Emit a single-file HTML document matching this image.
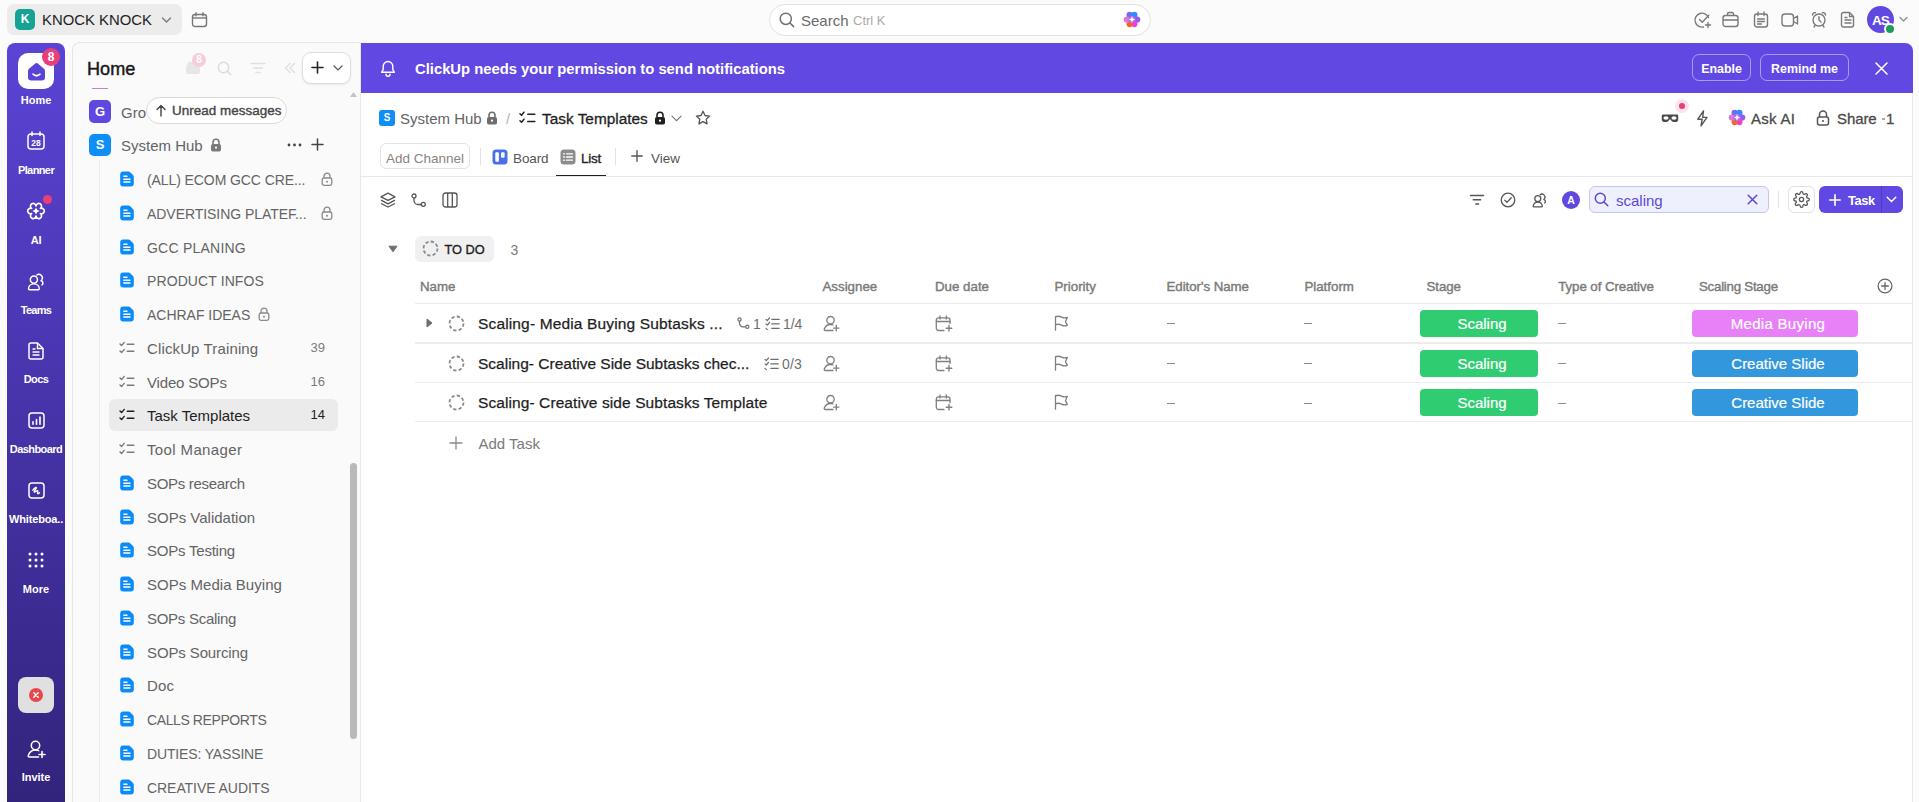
<!DOCTYPE html>
<html><head><meta charset="utf-8">
<style>
*{box-sizing:border-box;margin:0;padding:0}
html,body{width:1919px;height:802px;overflow:hidden}
body{background:#fbfbfb;font-family:"Liberation Sans",sans-serif;color:#202020;position:relative}
.a{position:absolute}
.ic{position:absolute;display:block;overflow:visible}
.t{position:absolute;white-space:nowrap;line-height:1}
/* rail */
#rail{left:7px;top:42.5px;width:58px;height:780px;border-radius:8px 8px 0 0;background:linear-gradient(180deg,#5a44d6 0%,#4a36b0 40%,#31237a 100%)}
.rl{position:absolute;left:7px;width:58px;text-align:center;color:#fff;font-weight:700;font-size:11px;line-height:1;letter-spacing:0}
/* sidebar */
#side{left:72px;top:42px;width:289px;height:780px;background:#fafafa;border:1px solid #e6e6e6;border-right:1px solid #e8e8e8;border-radius:8px 0 0 0}
.si{position:absolute;left:147px;font-size:14.6px;color:#646464;line-height:1;white-space:nowrap}
.cnt{position:absolute;font-size:13px;color:#7a7a7a;line-height:1}
/* main */
#main{left:361px;top:43px;width:1551px;height:780px;background:#fff;border-radius:0 8px 0 0;overflow:hidden}
#banner{left:0;top:0;width:1551px;height:50px;background:#6248e3}
.bbtn{position:absolute;top:11px;height:27px;border:1px solid rgba(255,255,255,.45);border-radius:7px;color:#fff;font-weight:700;font-size:13.5px;line-height:29px;text-align:center}
.hd{position:absolute;top:280px;font-size:13.3px;color:#7a7a7a;line-height:1;white-space:nowrap;-webkit-text-stroke:0.4px #7a7a7a}
.row{position:absolute;left:54px;width:1497px;border-bottom:1px solid #ececec}
.tn{position:absolute;left:117px;font-size:15.4px;color:#1e1e1e;line-height:1;white-space:nowrap;-webkit-text-stroke:0.25px #1e1e1e}
.dash{position:absolute;width:8px;height:1.3px;background:#8a8a8a}
.badge{position:absolute;height:27px;border-radius:4px;color:#fff;font-size:15px;line-height:27px;text-align:center;padding-left:6px;-webkit-text-stroke:0.2px #fff}
</style></head><body>

<!-- ============ TOP BAR ============ -->
<div class="a" style="left:7px;top:4px;width:175px;height:31px;background:#ececec;border-radius:7px"></div>
<div class="a" style="left:15px;top:9px;width:20px;height:21px;background:#16a394;border-radius:5px;color:#fff;font-weight:700;font-size:12px;line-height:21px;text-align:center">K</div>
<div class="t" style="left:42px;top:13px;font-size:14.9px;color:#1f1f1f">KNOCK KNOCK</div>
<svg class="ic" style="left:161px;top:16px" width="11" height="8" viewBox="0 0 11 8"><path d="M1.5 2l4 4 4-4" fill="none" stroke="#777" stroke-width="1.3" stroke-linecap="round" stroke-linejoin="round"/></svg>
<svg class="ic" style="left:191px;top:11px" width="17" height="17" viewBox="0 0 17 17"><rect x="1.5" y="3.5" width="14" height="12" rx="2.5" fill="none" stroke="#777" stroke-width="1.4"/><path d="M1.5 7h14" stroke="#777" stroke-width="1.4"/><path d="M5 1.8v3M12 1.8v3" stroke="#777" stroke-width="1.4" stroke-linecap="round"/></svg>

<!-- search -->
<div class="a" style="left:769px;top:3.5px;width:382px;height:32.5px;background:#fff;border:1px solid #e2e2e2;border-radius:16px"></div>
<svg class="ic" style="left:779px;top:12px" width="16" height="16" viewBox="0 0 16 16"><circle cx="6.8" cy="6.8" r="5.6" fill="none" stroke="#6e6e6e" stroke-width="1.5"/><path d="M11 11l3.6 3.6" stroke="#6e6e6e" stroke-width="1.5" stroke-linecap="round"/></svg>
<div class="t" style="left:801px;top:13px;font-size:15px;color:#6b6b6b">Search</div>
<div class="t" style="left:853px;top:14px;font-size:13px;color:#a9a9a9">Ctrl K</div>
<svg class="ic" style="left:1123px;top:11px" width="18" height="17" viewBox="0 0 18 17"><circle cx="6.6" cy="3.9" r="3.1" fill="#6f6cf2"/><circle cx="11.4" cy="3.9" r="3.1" fill="#2f8cff"/><circle cx="14.2" cy="8.5" r="3.1" fill="#9a57f0"/><circle cx="11.4" cy="13.1" r="3.1" fill="#ec3fd0"/><circle cx="6.6" cy="13.1" r="3.1" fill="#f2652c"/><circle cx="3.8" cy="8.5" r="3.1" fill="#d779d6"/><circle cx="9" cy="8.5" r="3.5" fill="#b26be8"/><path d="M9 5.3l.9 2.3 2.3.9-2.3.9L9 11.7l-.9-2.3-2.3-.9 2.3-.9z" fill="#fff"/></svg>

<!-- top right icons -->
<svg class="ic" style="left:1694px;top:11px" width="18" height="18" viewBox="0 0 18 18"><path d="M14.5 6.5A7 7 0 1 0 9.5 16" fill="none" stroke="#7a7a7a" stroke-width="1.4" stroke-linecap="round"/><path d="M5.5 8.5l2.8 2.8 6.5-7" fill="none" stroke="#7a7a7a" stroke-width="1.4" stroke-linecap="round" stroke-linejoin="round"/><path d="M14 11.5v5M11.5 14h5" stroke="#7a7a7a" stroke-width="1.4" stroke-linecap="round"/></svg>
<svg class="ic" style="left:1722px;top:11px" width="17" height="17" viewBox="0 0 17 17"><rect x="1" y="4.5" width="15" height="11" rx="2.5" fill="none" stroke="#7a7a7a" stroke-width="1.4"/><path d="M5.5 4.5V3a1.5 1.5 0 0 1 1.5-1.5h3A1.5 1.5 0 0 1 11.5 3v1.5M1 9h15" fill="none" stroke="#7a7a7a" stroke-width="1.4"/></svg>
<svg class="ic" style="left:1753px;top:11px" width="16" height="17" viewBox="0 0 16 17"><rect x="1.5" y="3" width="13" height="13" rx="2.5" fill="none" stroke="#7a7a7a" stroke-width="1.4"/><path d="M5 1v3.5M11 1v3.5M4.5 8h7M4.5 10.5h7M4.5 13h4" stroke="#7a7a7a" stroke-width="1.3" stroke-linecap="round"/></svg>
<svg class="ic" style="left:1781px;top:12px" width="18" height="16" viewBox="0 0 18 16"><rect x="1" y="2" width="11.5" height="12" rx="3" fill="none" stroke="#7a7a7a" stroke-width="1.4"/><path d="M12.5 6.5l4-2.5v8l-4-2.5" fill="none" stroke="#7a7a7a" stroke-width="1.4" stroke-linejoin="round"/></svg>
<svg class="ic" style="left:1811px;top:11px" width="16" height="17" viewBox="0 0 16 17"><circle cx="8" cy="9" r="6" fill="none" stroke="#7a7a7a" stroke-width="1.4"/><path d="M8 5.8V9l2 2M1.5 4a2.5 2.5 0 0 1 3-2.3M14.5 4a2.5 2.5 0 0 0-3-2.3M4 14.5L3 16M12 14.5l1 1.5" fill="none" stroke="#7a7a7a" stroke-width="1.4" stroke-linecap="round"/></svg>
<svg class="ic" style="left:1840px;top:11px" width="16" height="17" viewBox="0 0 16 17"><path d="M3.5 1.5h6l4 4V14a2 2 0 0 1-2 2h-8a2 2 0 0 1-2-2V3.5a2 2 0 0 1 2-2z" fill="none" stroke="#7a7a7a" stroke-width="1.4" stroke-linejoin="round"/><path d="M9.5 1.5v4h4M4.5 9h7M4.5 12h7M4.5 6.5h3" fill="none" stroke="#7a7a7a" stroke-width="1.3"/></svg>
<div class="a" style="left:1867px;top:6px;width:27px;height:27px;border-radius:50%;background:#6049e3;color:#fff;font-weight:700;font-size:13.5px;line-height:29px;text-align:center;letter-spacing:-0.8px">AS</div>
<div class="a" style="left:1884px;top:23px;width:12px;height:12px;border-radius:50%;background:#1e9a5a;border:2px solid #fbfbfb"></div>
<svg class="ic" style="left:1899px;top:16px" width="9" height="7" viewBox="0 0 9 7"><path d="M1 1.5l3.5 3.5 3.5-3.5" fill="none" stroke="#888" stroke-width="1.2" stroke-linecap="round"/></svg>

<!-- ============ RAIL ============ -->
<div id="rail" class="a"></div>
<div class="a" style="left:18px;top:53px;width:36px;height:36px;background:#fff;border-radius:10px"></div>
<svg class="ic" style="left:27px;top:62px" width="19" height="19" viewBox="0 0 19 19"><path d="M2 6.8L7.9 1.7Q9.5.4 11.1 1.7L17 6.8Q18 7.6 18 9v6.3Q18 18.5 14.8 18.5H4.2Q1 18.5 1 15.3V9Q1 7.6 2 6.8z" fill="#5a44d6"/><path d="M6 12.2Q9.5 15.3 13 12.2" fill="none" stroke="#fff" stroke-width="1.7" stroke-linecap="round"/></svg>
<div class="a" style="left:42px;top:48px;width:18px;height:18px;border-radius:50%;background:#e83f7a;color:#fff;font-size:12px;font-weight:700;line-height:18px;text-align:center">8</div>
<div class="rl" style="top:95px;letter-spacing:0px">Home</div>

<svg class="ic" style="left:27px;top:131px" width="18" height="19" viewBox="0 0 18 19"><rect x="1" y="3" width="16" height="15" rx="3" fill="none" stroke="#fff" stroke-width="1.5"/><path d="M5 1v3.5M13 1v3.5" stroke="#fff" stroke-width="1.5" stroke-linecap="round"/><text x="9" y="15" font-family="Liberation Sans" font-size="8.5" font-weight="700" fill="#fff" text-anchor="middle">28</text></svg>
<div class="rl" style="top:165px;letter-spacing:-0.6px">Planner</div>

<svg class="ic" style="left:28.2px;top:203.2px" width="16" height="16" viewBox="0 0 19 19"><path d="M14.73 6.48A3.3 3.3 0 1 1 14.73 12.52A3.3 3.3 0 1 1 9.50 15.54A3.3 3.3 0 1 1 4.27 12.52A3.3 3.3 0 1 1 4.27 6.48A3.3 3.3 0 1 1 9.50 3.46A3.3 3.3 0 1 1 14.73 6.48z" fill="none" stroke="#fff" stroke-width="2" stroke-linejoin="round"/><path d="M9.5 5.2l1.4 2.9 2.9 1.4-2.9 1.4-1.4 2.9-1.4-2.9-2.9-1.4 2.9-1.4z" fill="#fff"/></svg>
<div class="a" style="left:43px;top:195px;width:9px;height:9px;border-radius:50%;background:#e83f7a"></div>
<div class="rl" style="top:235px;letter-spacing:-0.25px">AI</div>

<svg class="ic" style="left:27px;top:272px" width="19" height="19" viewBox="0 0 16 16"><circle cx="5.8" cy="6.4" r="3" fill="none" stroke="#fff" stroke-width="1.25"/><path d="M1.3 14.2c0-2.5 2-4.2 4.5-4.2s4.5 1.7 4.5 4.2q0 .7-.7.7H2q-.7 0-.7-.7z" fill="none" stroke="#fff" stroke-width="1.25" stroke-linejoin="round"/><path d="M8.3 2.5a3 3 0 0 1 4.3 3.9q-.3.5-.8.8q1.8.8 1.6 2.5q-.1.8-.8 1.2" fill="none" stroke="#fff" stroke-width="1.25" stroke-linecap="round" stroke-linejoin="round"/></svg>
<div class="rl" style="top:305px;letter-spacing:-0.75px">Teams</div>

<svg class="ic" style="left:28px;top:342px" width="16" height="18" viewBox="0 0 16 18"><path d="M3 1h6.5L15 6.5V15a2 2 0 0 1-2 2H3a2 2 0 0 1-2-2V3a2 2 0 0 1 2-2z" fill="none" stroke="#fff" stroke-width="1.5" stroke-linejoin="round"/><path d="M9.5 1v5.5H15M4.5 10h7M4.5 13h7M4.5 7h3" fill="none" stroke="#fff" stroke-width="1.4"/></svg>
<div class="rl" style="top:374px;letter-spacing:-0.6px">Docs</div>

<svg class="ic" style="left:28px;top:412px" width="17" height="17" viewBox="0 0 17 17"><rect x="1" y="1" width="15" height="15" rx="3" fill="none" stroke="#fff" stroke-width="1.5"/><path d="M5 12.3V9.8M8.5 12.3V7.6M12 12.3V5" stroke="#fff" stroke-width="1.6" stroke-linecap="round"/></svg>
<div class="rl" style="top:444px;letter-spacing:-0.55px">Dashboard</div>

<svg class="ic" style="left:28px;top:482px" width="17" height="17" viewBox="0 0 17 17"><rect x="1" y="1" width="15" height="15" rx="3" fill="none" stroke="#fff" stroke-width="1.5"/><path d="M4.8 8.2c1.2-1.8 3.2-3.4 3.6-2.6.5 1-3 3.5-2.3 4.4.6.8 3.2-2 3.8-1.2.5.7-1 2.3-.3 2.8.4.3 1.3-.3 1.9-.9" fill="none" stroke="#fff" stroke-width="1.3" stroke-linecap="round" stroke-linejoin="round"/></svg>
<div class="rl" style="top:514px;letter-spacing:-0.14px">Whiteboa..</div>

<svg class="ic" style="left:27px;top:551px" width="18" height="18" viewBox="0 0 18 18"><g fill="#fff"><circle cx="3" cy="3" r="1.5"/><circle cx="9" cy="3" r="1.5"/><circle cx="15" cy="3" r="1.5"/><circle cx="3" cy="9" r="1.5"/><circle cx="9" cy="9" r="1.5"/><circle cx="15" cy="9" r="1.5"/><circle cx="3" cy="15" r="1.5"/><circle cx="9" cy="15" r="1.5"/><circle cx="15" cy="15" r="1.5"/></g></svg>
<div class="rl" style="top:584px;letter-spacing:0px">More</div>

<div class="a" style="left:18px;top:677px;width:36px;height:36px;background:#e0e0e0;border-radius:8px"></div>
<div class="a" style="left:29px;top:688px;width:14px;height:14px;border-radius:50%;background:#e5484d"></div>
<svg class="ic" style="left:29px;top:688px" width="14" height="14" viewBox="0 0 14 14"><path d="M4.8 4.8l4.4 4.4M9.2 4.8L4.8 9.2" stroke="#fff" stroke-width="1.5" stroke-linecap="round"/></svg>

<svg class="ic" style="left:27px;top:740px" width="19" height="19" viewBox="0 0 19 19"><circle cx="8.5" cy="5.5" r="4.2" fill="none" stroke="#fff" stroke-width="1.5"/><path d="M11.5 17H2.5c-1 0-1.5-.8-1.2-1.6C2.5 12 5 10 8.5 10c1.2 0 2.3.2 3.2.6" fill="none" stroke="#fff" stroke-width="1.5" stroke-linecap="round"/><path d="M15 11.5v6M12 14.5h6" stroke="#fff" stroke-width="1.6" stroke-linecap="round"/></svg>
<div class="rl" style="top:772px;letter-spacing:0px">Invite</div>

<!-- ============ SIDEBAR ============ -->
<div id="side" class="a"></div>
<div class="t" style="left:87px;top:60px;font-size:18.1px;color:#1a1a1a;-webkit-text-stroke:0.45px #1a1a1a">Home</div>
<svg class="ic" style="left:185px;top:60px" width="16" height="15" viewBox="0 0 16 15"><path d="M1 8l2-6h10l2 6v4a2 2 0 0 1-2 2H3a2 2 0 0 1-2-2z" fill="#e6e6e6"/></svg>
<div class="a" style="left:192px;top:53px;width:14px;height:14px;border-radius:50%;background:#f7cddd;color:#fff;font-size:10px;font-weight:700;line-height:14px;text-align:center">8</div>
<svg class="ic" style="left:217px;top:61px" width="15" height="15" viewBox="0 0 15 15"><circle cx="6.5" cy="6.5" r="5.2" fill="none" stroke="#dcdcdc" stroke-width="1.5"/><path d="M10.5 10.5l3.3 3.3" stroke="#dcdcdc" stroke-width="1.5" stroke-linecap="round"/></svg>
<svg class="ic" style="left:250px;top:62px" width="16" height="12" viewBox="0 0 16 12"><path d="M1 1.5h14M3.5 6h9M6 10.5h4" stroke="#e0e0e0" stroke-width="1.5" stroke-linecap="round"/></svg>
<svg class="ic" style="left:284px;top:62px" width="12" height="12" viewBox="0 0 12 12"><path d="M6 1.5L1.5 6 6 10.5M10.5 1.5L6 6l4.5 4.5" fill="none" stroke="#dedede" stroke-width="1.4" stroke-linecap="round" stroke-linejoin="round"/></svg>
<div class="a" style="left:302px;top:52px;width:49px;height:32px;background:#fff;border:1px solid #dedede;border-radius:9px;box-shadow:0 1px 2px rgba(0,0,0,.08)"></div>
<svg class="ic" style="left:311px;top:61px" width="13" height="13" viewBox="0 0 13 13"><path d="M6.5 1v11M1 6.5h11" stroke="#222" stroke-width="1.6" stroke-linecap="round"/></svg>
<svg class="ic" style="left:333px;top:65px" width="10" height="6" viewBox="0 0 10 6"><path d="M1 1l4 4 4-4" fill="none" stroke="#555" stroke-width="1.2" stroke-linecap="round"/></svg>
<div class="a" style="left:92px;top:88px;width:16px;height:1px;background:#c77ddb"></div>
<svg class="ic" style="left:349px;top:91px" width="9" height="7" viewBox="0 0 9 7"><path d="M4.5 1L8 6H1z" fill="#c4c4c4"/></svg>
<div class="a" style="left:89px;top:100px;width:22px;height:23px;background:#5f48e0;border-radius:5px;color:#fff;font-weight:700;font-size:13px;line-height:23px;text-align:center">G</div>
<div class="t" style="left:121px;top:105px;font-size:15px;color:#646464">Gro</div>
<div class="a" style="left:146px;top:97px;width:141px;height:27px;background:#fff;border:1px solid #d9d9d9;border-radius:14px"></div>
<svg class="ic" style="left:156px;top:104px" width="10" height="13" viewBox="0 0 10 13"><path d="M5 12V1.5M1 5.5l4-4 4 4" fill="none" stroke="#444" stroke-width="1.4" stroke-linecap="round" stroke-linejoin="round"/></svg>
<div class="t" style="left:172px;top:104px;font-size:13.4px;letter-spacing:0.05px;color:#474747;-webkit-text-stroke:0.4px #474747">Unread messages</div>
<div class="a" style="left:89px;top:134px;width:22px;height:22px;background:#0e8ff5;border-radius:5px;color:#fff;font-weight:700;font-size:13px;line-height:22px;text-align:center">S</div>
<div class="t" style="left:121px;top:138px;font-size:15px;color:#646464">System Hub</div>
<svg class="ic" style="left:210px;top:138px" width="12" height="14" viewBox="0 0 12 14"><path d="M3 6V4.2a3 3 0 0 1 6 0V6" fill="none" stroke="#7a7a7a" stroke-width="1.6"/><rect x="1" y="6" width="10" height="7.5" rx="1.8" fill="#7a7a7a"/><circle cx="6" cy="9.7" r="1.1" fill="#fafafa"/></svg>
<svg class="ic" style="left:287px;top:143px" width="15" height="4" viewBox="0 0 15 4"><circle cx="2" cy="2" r="1.4" fill="#444"/><circle cx="7.5" cy="2" r="1.4" fill="#444"/><circle cx="13" cy="2" r="1.4" fill="#444"/></svg>
<svg class="ic" style="left:311px;top:138px" width="13" height="13" viewBox="0 0 13 13"><path d="M6.5 1v11M1 6.5h11" stroke="#444" stroke-width="1.5" stroke-linecap="round"/></svg>
<div class="a" style="left:99px;top:160px;width:1px;height:642px;background:#ebebeb"></div>
<div class="a" style="left:109px;top:399px;width:229px;height:32px;background:#ebebeb;border-radius:6px"></div>
<svg class="ic" style="left:120px;top:171px" width="14" height="16" viewBox="0 0 14 16"><path d="M3.2 0.6h5.2q1.2 0 2 .8l2.6 2.6q.8.8.8 2V12.6a3 3 0 0 1-3 3H3.2a3 3 0 0 1-3-3V3.6a3 3 0 0 1 3-3z" fill="#0b8bfa"/><path d="M3.8 5.2h3.2M3.8 8.2h6.2M3.8 11h6.2" stroke="#fff" stroke-width="1.4" stroke-linecap="round"/></svg>
<div class="si" style="top:173px;font-size:14px;letter-spacing:-0.09px;color:#646464">(ALL) ECOM GCC CRE...</div>
<svg class="ic" style="left:321px;top:172px" width="12" height="14" viewBox="0 0 12 14"><path d="M3 6V4.2a3 3 0 0 1 6 0V6" fill="none" stroke="#8a8a8a" stroke-width="1.3"/><rect x="1.2" y="6" width="9.6" height="7.3" rx="1.8" fill="none" stroke="#8a8a8a" stroke-width="1.3"/><circle cx="6" cy="9.7" r="1" fill="#8a8a8a"/></svg>
<svg class="ic" style="left:120px;top:205px" width="14" height="16" viewBox="0 0 14 16"><path d="M3.2 0.6h5.2q1.2 0 2 .8l2.6 2.6q.8.8.8 2V12.6a3 3 0 0 1-3 3H3.2a3 3 0 0 1-3-3V3.6a3 3 0 0 1 3-3z" fill="#0b8bfa"/><path d="M3.8 5.2h3.2M3.8 8.2h6.2M3.8 11h6.2" stroke="#fff" stroke-width="1.4" stroke-linecap="round"/></svg>
<div class="si" style="top:207px;font-size:14px;letter-spacing:-0.05px;color:#646464">ADVERTISING PLATEF...</div>
<svg class="ic" style="left:321px;top:206px" width="12" height="14" viewBox="0 0 12 14"><path d="M3 6V4.2a3 3 0 0 1 6 0V6" fill="none" stroke="#8a8a8a" stroke-width="1.3"/><rect x="1.2" y="6" width="9.6" height="7.3" rx="1.8" fill="none" stroke="#8a8a8a" stroke-width="1.3"/><circle cx="6" cy="9.7" r="1" fill="#8a8a8a"/></svg>
<svg class="ic" style="left:120px;top:239px" width="14" height="16" viewBox="0 0 14 16"><path d="M3.2 0.6h5.2q1.2 0 2 .8l2.6 2.6q.8.8.8 2V12.6a3 3 0 0 1-3 3H3.2a3 3 0 0 1-3-3V3.6a3 3 0 0 1 3-3z" fill="#0b8bfa"/><path d="M3.8 5.2h3.2M3.8 8.2h6.2M3.8 11h6.2" stroke="#fff" stroke-width="1.4" stroke-linecap="round"/></svg>
<div class="si" style="top:241px;font-size:14px;letter-spacing:0.23px;color:#646464">GCC PLANING</div>
<svg class="ic" style="left:120px;top:272px" width="14" height="16" viewBox="0 0 14 16"><path d="M3.2 0.6h5.2q1.2 0 2 .8l2.6 2.6q.8.8.8 2V12.6a3 3 0 0 1-3 3H3.2a3 3 0 0 1-3-3V3.6a3 3 0 0 1 3-3z" fill="#0b8bfa"/><path d="M3.8 5.2h3.2M3.8 8.2h6.2M3.8 11h6.2" stroke="#fff" stroke-width="1.4" stroke-linecap="round"/></svg>
<div class="si" style="top:274px;font-size:14px;letter-spacing:0.1px;color:#646464">PRODUCT INFOS</div>
<svg class="ic" style="left:120px;top:306px" width="14" height="16" viewBox="0 0 14 16"><path d="M3.2 0.6h5.2q1.2 0 2 .8l2.6 2.6q.8.8.8 2V12.6a3 3 0 0 1-3 3H3.2a3 3 0 0 1-3-3V3.6a3 3 0 0 1 3-3z" fill="#0b8bfa"/><path d="M3.8 5.2h3.2M3.8 8.2h6.2M3.8 11h6.2" stroke="#fff" stroke-width="1.4" stroke-linecap="round"/></svg>
<div class="si" style="top:308px;font-size:14px;letter-spacing:-0.02px;color:#646464">ACHRAF IDEAS</div>
<svg class="ic" style="left:258px;top:307px" width="12" height="14" viewBox="0 0 12 14"><path d="M3 6V4.2a3 3 0 0 1 6 0V6" fill="none" stroke="#8a8a8a" stroke-width="1.3"/><rect x="1.2" y="6" width="9.6" height="7.3" rx="1.8" fill="none" stroke="#8a8a8a" stroke-width="1.3"/><circle cx="6" cy="9.7" r="1" fill="#8a8a8a"/></svg>
<svg class="ic" style="left:119px;top:341px" width="16" height="14" viewBox="0 0 16 14"><path d="M1 3l1.6 1.6L5.2 1.4M1 10l1.6 1.6 2.6-3.2" fill="none" stroke="#7a7a7a" stroke-width="1.4" stroke-linecap="round" stroke-linejoin="round"/><path d="M8.3 3.3h6.5M8.3 10.3h6.5" stroke="#7a7a7a" stroke-width="1.5" stroke-linecap="round"/></svg>
<div class="si" style="top:341px;font-size:15px;letter-spacing:0.13px;color:#646464">ClickUp Training</div>
<div class="cnt" style="right:1594px;top:341px;color:#7a7a7a">39</div>
<svg class="ic" style="left:119px;top:375px" width="16" height="14" viewBox="0 0 16 14"><path d="M1 3l1.6 1.6L5.2 1.4M1 10l1.6 1.6 2.6-3.2" fill="none" stroke="#7a7a7a" stroke-width="1.4" stroke-linecap="round" stroke-linejoin="round"/><path d="M8.3 3.3h6.5M8.3 10.3h6.5" stroke="#7a7a7a" stroke-width="1.5" stroke-linecap="round"/></svg>
<div class="si" style="top:375px;font-size:15px;letter-spacing:-0.17px;color:#646464">Video SOPs</div>
<div class="cnt" style="right:1594px;top:375px;color:#7a7a7a">16</div>
<svg class="ic" style="left:119px;top:408px" width="16" height="14" viewBox="0 0 16 14"><path d="M1 3l1.6 1.6L5.2 1.4M1 10l1.6 1.6 2.6-3.2" fill="none" stroke="#1e1e1e" stroke-width="1.4" stroke-linecap="round" stroke-linejoin="round"/><path d="M8.3 3.3h6.5M8.3 10.3h6.5" stroke="#1e1e1e" stroke-width="1.5" stroke-linecap="round"/></svg>
<div class="si" style="top:408px;font-size:15px;color:#1e1e1e">Task Templates</div>
<div class="cnt" style="right:1594px;top:408px;color:#1e1e1e">14</div>
<svg class="ic" style="left:119px;top:442px" width="16" height="14" viewBox="0 0 16 14"><path d="M1 3l1.6 1.6L5.2 1.4M1 10l1.6 1.6 2.6-3.2" fill="none" stroke="#7a7a7a" stroke-width="1.4" stroke-linecap="round" stroke-linejoin="round"/><path d="M8.3 3.3h6.5M8.3 10.3h6.5" stroke="#7a7a7a" stroke-width="1.5" stroke-linecap="round"/></svg>
<div class="si" style="top:442px;font-size:15px;letter-spacing:0.37px;color:#646464">Tool Manager</div>
<svg class="ic" style="left:120px;top:475px" width="14" height="16" viewBox="0 0 14 16"><path d="M3.2 0.6h5.2q1.2 0 2 .8l2.6 2.6q.8.8.8 2V12.6a3 3 0 0 1-3 3H3.2a3 3 0 0 1-3-3V3.6a3 3 0 0 1 3-3z" fill="#0b8bfa"/><path d="M3.8 5.2h3.2M3.8 8.2h6.2M3.8 11h6.2" stroke="#fff" stroke-width="1.4" stroke-linecap="round"/></svg>
<div class="si" style="top:476px;font-size:15px;letter-spacing:-0.3px;color:#646464">SOPs research</div>
<svg class="ic" style="left:120px;top:509px" width="14" height="16" viewBox="0 0 14 16"><path d="M3.2 0.6h5.2q1.2 0 2 .8l2.6 2.6q.8.8.8 2V12.6a3 3 0 0 1-3 3H3.2a3 3 0 0 1-3-3V3.6a3 3 0 0 1 3-3z" fill="#0b8bfa"/><path d="M3.8 5.2h3.2M3.8 8.2h6.2M3.8 11h6.2" stroke="#fff" stroke-width="1.4" stroke-linecap="round"/></svg>
<div class="si" style="top:510px;font-size:15px;letter-spacing:0px;color:#646464">SOPs Validation</div>
<svg class="ic" style="left:120px;top:542px" width="14" height="16" viewBox="0 0 14 16"><path d="M3.2 0.6h5.2q1.2 0 2 .8l2.6 2.6q.8.8.8 2V12.6a3 3 0 0 1-3 3H3.2a3 3 0 0 1-3-3V3.6a3 3 0 0 1 3-3z" fill="#0b8bfa"/><path d="M3.8 5.2h3.2M3.8 8.2h6.2M3.8 11h6.2" stroke="#fff" stroke-width="1.4" stroke-linecap="round"/></svg>
<div class="si" style="top:543px;font-size:15px;letter-spacing:-0.22px;color:#646464">SOPs Testing</div>
<svg class="ic" style="left:120px;top:576px" width="14" height="16" viewBox="0 0 14 16"><path d="M3.2 0.6h5.2q1.2 0 2 .8l2.6 2.6q.8.8.8 2V12.6a3 3 0 0 1-3 3H3.2a3 3 0 0 1-3-3V3.6a3 3 0 0 1 3-3z" fill="#0b8bfa"/><path d="M3.8 5.2h3.2M3.8 8.2h6.2M3.8 11h6.2" stroke="#fff" stroke-width="1.4" stroke-linecap="round"/></svg>
<div class="si" style="top:577px;font-size:15px;letter-spacing:0.04px;color:#646464">SOPs Media Buying</div>
<svg class="ic" style="left:120px;top:610px" width="14" height="16" viewBox="0 0 14 16"><path d="M3.2 0.6h5.2q1.2 0 2 .8l2.6 2.6q.8.8.8 2V12.6a3 3 0 0 1-3 3H3.2a3 3 0 0 1-3-3V3.6a3 3 0 0 1 3-3z" fill="#0b8bfa"/><path d="M3.8 5.2h3.2M3.8 8.2h6.2M3.8 11h6.2" stroke="#fff" stroke-width="1.4" stroke-linecap="round"/></svg>
<div class="si" style="top:611px;font-size:15px;letter-spacing:-0.28px;color:#646464">SOPs Scaling</div>
<svg class="ic" style="left:120px;top:644px" width="14" height="16" viewBox="0 0 14 16"><path d="M3.2 0.6h5.2q1.2 0 2 .8l2.6 2.6q.8.8.8 2V12.6a3 3 0 0 1-3 3H3.2a3 3 0 0 1-3-3V3.6a3 3 0 0 1 3-3z" fill="#0b8bfa"/><path d="M3.8 5.2h3.2M3.8 8.2h6.2M3.8 11h6.2" stroke="#fff" stroke-width="1.4" stroke-linecap="round"/></svg>
<div class="si" style="top:645px;font-size:15px;letter-spacing:-0.12px;color:#646464">SOPs Sourcing</div>
<svg class="ic" style="left:120px;top:677px" width="14" height="16" viewBox="0 0 14 16"><path d="M3.2 0.6h5.2q1.2 0 2 .8l2.6 2.6q.8.8.8 2V12.6a3 3 0 0 1-3 3H3.2a3 3 0 0 1-3-3V3.6a3 3 0 0 1 3-3z" fill="#0b8bfa"/><path d="M3.8 5.2h3.2M3.8 8.2h6.2M3.8 11h6.2" stroke="#fff" stroke-width="1.4" stroke-linecap="round"/></svg>
<div class="si" style="top:678px;font-size:15px;letter-spacing:0.2px;color:#646464">Doc</div>
<svg class="ic" style="left:120px;top:711px" width="14" height="16" viewBox="0 0 14 16"><path d="M3.2 0.6h5.2q1.2 0 2 .8l2.6 2.6q.8.8.8 2V12.6a3 3 0 0 1-3 3H3.2a3 3 0 0 1-3-3V3.6a3 3 0 0 1 3-3z" fill="#0b8bfa"/><path d="M3.8 5.2h3.2M3.8 8.2h6.2M3.8 11h6.2" stroke="#fff" stroke-width="1.4" stroke-linecap="round"/></svg>
<div class="si" style="top:713px;font-size:14px;letter-spacing:-0.4px;color:#646464">CALLS REPPORTS</div>
<svg class="ic" style="left:120px;top:745px" width="14" height="16" viewBox="0 0 14 16"><path d="M3.2 0.6h5.2q1.2 0 2 .8l2.6 2.6q.8.8.8 2V12.6a3 3 0 0 1-3 3H3.2a3 3 0 0 1-3-3V3.6a3 3 0 0 1 3-3z" fill="#0b8bfa"/><path d="M3.8 5.2h3.2M3.8 8.2h6.2M3.8 11h6.2" stroke="#fff" stroke-width="1.4" stroke-linecap="round"/></svg>
<div class="si" style="top:747px;font-size:14px;letter-spacing:-0.15px;color:#646464">DUTIES: YASSINE</div>
<svg class="ic" style="left:120px;top:779px" width="14" height="16" viewBox="0 0 14 16"><path d="M3.2 0.6h5.2q1.2 0 2 .8l2.6 2.6q.8.8.8 2V12.6a3 3 0 0 1-3 3H3.2a3 3 0 0 1-3-3V3.6a3 3 0 0 1 3-3z" fill="#0b8bfa"/><path d="M3.8 5.2h3.2M3.8 8.2h6.2M3.8 11h6.2" stroke="#fff" stroke-width="1.4" stroke-linecap="round"/></svg>
<div class="si" style="top:781px;font-size:14px;letter-spacing:-0.06px;color:#646464">CREATIVE AUDITS</div>
<div class="a" style="left:350px;top:463px;width:7px;height:276px;background:#b9b9b9;border-radius:4px"></div>

<!-- ============ MAIN ============ -->
<div class="a" style="left:361px;top:43px;width:1552px;height:780px;background:#fff;border-radius:0 8px 0 0;border-right:1px solid #e9e9e9"></div>
<div class="a" style="left:361px;top:43px;width:1552px;height:50px;background:#6248e3;border-radius:0 8px 0 0"></div>
<svg class="ic" style="left:380px;top:60px" width="16" height="17" viewBox="0 0 16 17"><path d="M8 1.5a4.8 4.8 0 0 0-4.8 4.8v3.4L1.6 12.3h12.8l-1.6-2.6V6.3A4.8 4.8 0 0 0 8 1.5z" fill="none" stroke="#fff" stroke-width="1.4" stroke-linejoin="round"/><path d="M6 14.3a2 2 0 0 0 4 0" fill="none" stroke="#fff" stroke-width="1.4" stroke-linecap="round"/></svg>
<div class="t" style="left:415px;top:62px;font-size:14.8px;font-weight:700;color:#fff">ClickUp needs your permission to send notifications</div>
<div class="bbtn" style="left:1692px;top:54px;width:59px;font-size:12.4px">Enable</div>
<div class="bbtn" style="left:1760px;top:54px;width:89px;font-size:12.4px">Remind me</div>
<svg class="ic" style="left:1875px;top:62px" width="13" height="13" viewBox="0 0 13 13"><path d="M1 1l11 11M12 1L1 12" stroke="#fff" stroke-width="1.5" stroke-linecap="round"/></svg>

<!-- breadcrumb -->
<div class="a" style="left:379px;top:110px;width:16px;height:16px;background:#0e8ff5;border-radius:3px;color:#fff;font-weight:700;font-size:10px;line-height:16px;text-align:center">S</div>
<div class="t" style="left:400px;top:111px;font-size:15px;color:#646464">System Hub</div>
<svg class="ic" style="left:486px;top:111px" width="12" height="14" viewBox="0 0 12 14"><path d="M3 6V4.2a3 3 0 0 1 6 0V6" fill="none" stroke="#6e6e6e" stroke-width="1.6"/><rect x="1" y="6" width="10" height="7.5" rx="1.8" fill="#6e6e6e"/><circle cx="6" cy="9.7" r="1.1" fill="#fff"/></svg>
<div class="t" style="left:506px;top:111px;font-size:15px;color:#b4b4b4">/</div>
<svg class="ic" style="left:519px;top:111px" width="17" height="14" viewBox="0 0 17 14"><path d="M1 2.8l1.5 1.5L5 1.2M1 9.8l1.5 1.5L5 8.2" fill="none" stroke="#222" stroke-width="1.5" stroke-linecap="round" stroke-linejoin="round"/><path d="M8.8 3.3h7M8.8 10.5h7" stroke="#222" stroke-width="1.6" stroke-linecap="round"/></svg>
<div class="t" style="left:542px;top:111px;font-size:15.4px;color:#1f1f1f;-webkit-text-stroke:0.3px #1f1f1f">Task Templates</div>
<svg class="ic" style="left:654px;top:111px" width="12" height="14" viewBox="0 0 12 14"><path d="M3 6V4.2a3 3 0 0 1 6 0V6" fill="none" stroke="#1f1f1f" stroke-width="1.6"/><rect x="1" y="6" width="10" height="7.5" rx="1.8" fill="#1f1f1f"/><circle cx="6" cy="9.7" r="1.1" fill="#fff"/></svg>
<svg class="ic" style="left:671px;top:115px" width="11" height="7" viewBox="0 0 11 7"><path d="M1 1.2l4.5 4.5 4.5-4.5" fill="none" stroke="#777" stroke-width="1.2" stroke-linecap="round"/></svg>
<svg class="ic" style="left:695px;top:110px" width="16" height="16" viewBox="0 0 16 16"><path d="M8 1.3l2 4.2 4.6.6-3.4 3.2.9 4.6L8 11.6l-4.1 2.3.9-4.6L1.4 6.1 6 5.5z" fill="none" stroke="#555" stroke-width="1.3" stroke-linejoin="round"/></svg>

<svg class="ic" style="left:1661px;top:112px" width="18" height="11" viewBox="0 0 18 11"><path d="M2 2.5h14a1.2 1.2 0 0 1 1.2 1.2v3.5A2.8 2.8 0 0 1 14.4 10h-1.6a2.8 2.8 0 0 1-2.2-1.1L9 7 7.4 8.9A2.8 2.8 0 0 1 5.2 10H3.6A2.8 2.8 0 0 1 .8 7.2V3.7A1.2 1.2 0 0 1 2 2.5z" fill="#4a4a4a"/><ellipse cx="5" cy="6" rx="2.6" ry="1.8" fill="#fff"/><ellipse cx="13" cy="6" rx="2.6" ry="1.8" fill="#fff"/></svg>
<div class="a" style="left:1675px;top:99px;width:14px;height:14px;border-radius:50%;background:#fde3ec"></div>
<div class="a" style="left:1679px;top:103px;width:6px;height:6px;border-radius:50%;background:#e83f7a"></div>
<svg class="ic" style="left:1696px;top:110px" width="13" height="17" viewBox="0 0 13 17"><path d="M7.5 1L1.8 9.2h4.4L5 15.8l6-8.4H6.7z" fill="none" stroke="#555" stroke-width="1.4" stroke-linejoin="round"/></svg>
<svg class="ic" style="left:1728px;top:109px" width="18" height="17" viewBox="0 0 18 17"><circle cx="6.6" cy="3.9" r="3.1" fill="#6f6cf2"/><circle cx="11.4" cy="3.9" r="3.1" fill="#2f8cff"/><circle cx="14.2" cy="8.5" r="3.1" fill="#9a57f0"/><circle cx="11.4" cy="13.1" r="3.1" fill="#ec3fd0"/><circle cx="6.6" cy="13.1" r="3.1" fill="#f2652c"/><circle cx="3.8" cy="8.5" r="3.1" fill="#d779d6"/><circle cx="9" cy="8.5" r="3.5" fill="#b26be8"/><path d="M9 5.3l.9 2.3 2.3.9-2.3.9L9 11.7l-.9-2.3-2.3-.9 2.3-.9z" fill="#fff"/></svg>
<div class="t" style="left:1751px;top:111px;font-size:15px;letter-spacing:0.3px;color:#4a4a4a;-webkit-text-stroke:0.3px #4a4a4a">Ask AI</div>
<svg class="ic" style="left:1816px;top:110px" width="14" height="16" viewBox="0 0 14 16"><path d="M3.5 7V4.6a3.5 3.5 0 0 1 7 0V7" fill="none" stroke="#555" stroke-width="1.5"/><rect x="1.5" y="7" width="11" height="8" rx="2" fill="none" stroke="#555" stroke-width="1.5"/><circle cx="7" cy="11" r="1" fill="#555"/></svg>
<div class="t" style="left:1837px;top:111px;font-size:15px;letter-spacing:-0.1px;color:#4a4a4a;-webkit-text-stroke:0.3px #4a4a4a">Share</div>
<div class="a" style="left:1881.5px;top:118px;width:3px;height:2px;background:#aaa"></div>
<div class="t" style="left:1886px;top:111px;font-size:15px;color:#4a4a4a;-webkit-text-stroke:0.3px #4a4a4a">1</div>

<!-- tabs -->
<div class="a" style="left:380px;top:143px;width:90px;height:26px;border:1px solid #e4e4e4;border-radius:6px"></div>
<div class="t" style="left:386px;top:152px;font-size:13.5px;color:#8b847d">Add Channel</div>
<div class="a" style="left:480px;top:148px;width:1px;height:17px;background:#e2e2e2"></div>
<svg class="ic" style="left:492px;top:149px" width="16" height="16" viewBox="0 0 16 16"><rect x="0.5" y="0.5" width="15" height="15" rx="3.5" fill="#4a6ee8"/><rect x="3.3" y="3.3" width="3.6" height="9.4" rx="1" fill="#fff"/><rect x="9" y="3.3" width="3.6" height="5.4" rx="1" fill="#fff"/></svg>
<div class="t" style="left:513px;top:152px;font-size:13.5px;letter-spacing:-0.1px;color:#555">Board</div>
<svg class="ic" style="left:560px;top:149px" width="16" height="16" viewBox="0 0 16 16"><rect x="0.5" y="0.5" width="15" height="15" rx="3.5" fill="#8c8c8c"/><path d="M3.5 4.8h1M6.5 4.8h6M3.5 8h1M6.5 8h6M3.5 11.2h1M6.5 11.2h6" stroke="#fff" stroke-width="1.3" stroke-linecap="round"/></svg>
<div class="t" style="left:581px;top:152px;font-size:13.5px;letter-spacing:-0.25px;color:#1f1f1f;-webkit-text-stroke:0.35px #1f1f1f">List</div>
<div class="a" style="left:556px;top:175px;width:50px;height:2px;background:#1f1f1f"></div>
<div class="a" style="left:615px;top:148px;width:1px;height:17px;background:#e2e2e2"></div>
<svg class="ic" style="left:631px;top:150px" width="12" height="12" viewBox="0 0 12 12"><path d="M6 .8v10.4M.8 6h10.4" stroke="#555" stroke-width="1.4" stroke-linecap="round"/></svg>
<div class="t" style="left:651px;top:152px;font-size:13.5px;color:#555">View</div>
<div class="a" style="left:361px;top:176px;width:1551px;height:1px;background:#e8e8e8"></div>

<!-- toolbar -->
<svg class="ic" style="left:380px;top:192px" width="16" height="16" viewBox="0 0 16 16"><path d="M8 1.2L15 4.8 8 8.4 1 4.8z" fill="none" stroke="#555" stroke-width="1.3" stroke-linejoin="round"/><path d="M1 8.2L8 11.8l7-3.6M1 11.5L8 15l7-3.5" fill="none" stroke="#555" stroke-width="1.3" stroke-linejoin="round"/></svg>
<svg class="ic" style="left:411px;top:193px" width="16" height="15" viewBox="0 0 16 15"><circle cx="3" cy="3" r="2" fill="none" stroke="#555" stroke-width="1.3"/><circle cx="12.3" cy="11.3" r="2" fill="none" stroke="#555" stroke-width="1.3"/><path d="M3 5v2.5a4 4 0 0 0 4 4h3.3" fill="none" stroke="#555" stroke-width="1.3"/></svg>
<svg class="ic" style="left:442px;top:192px" width="16" height="16" viewBox="0 0 16 16"><rect x="1" y="1" width="14" height="14" rx="2.5" fill="none" stroke="#555" stroke-width="1.3"/><path d="M5.7 1v14M10.3 1v14" stroke="#555" stroke-width="1.3"/></svg>

<svg class="ic" style="left:1469px;top:194px" width="16" height="12" viewBox="0 0 16 12"><path d="M1.5 1.5h13M4.3 5.8h7.4M6.8 10h2.8" stroke="#555" stroke-width="1.4" stroke-linecap="round"/></svg>
<svg class="ic" style="left:1500px;top:192px" width="16" height="16" viewBox="0 0 16 16"><circle cx="8" cy="8" r="6.8" fill="none" stroke="#555" stroke-width="1.3"/><path d="M4.8 8.2l2.2 2.2 4.2-4.6" fill="none" stroke="#555" stroke-width="1.3" stroke-linecap="round" stroke-linejoin="round"/></svg>
<svg class="ic" style="left:1532px;top:192px" width="16" height="16" viewBox="0 0 16 16"><circle cx="5.8" cy="6.6" r="3" fill="none" stroke="#555" stroke-width="1.3"/><path d="M1.3 14.2c0-2.5 2-4.2 4.5-4.2s4.5 1.7 4.5 4.2q0 .7-.7.7H2q-.7 0-.7-.7z" fill="none" stroke="#555" stroke-width="1.3" stroke-linejoin="round"/><path d="M8.3 2.6a3 3 0 0 1 4.3 3.9q-.3.5-.8.8q1.8.8 1.6 2.5q-.1.8-.8 1.2" fill="none" stroke="#555" stroke-width="1.3" stroke-linecap="round" stroke-linejoin="round"/></svg>
<div class="a" style="left:1562px;top:191px;width:18px;height:18px;border-radius:50%;background:#6049e3;color:#fff;font-weight:700;font-size:10.5px;line-height:18px;text-align:center">A</div>
<div class="a" style="left:1589px;top:186px;width:180px;height:27px;background:#eef0fd;border:1px solid #c9c3f3;border-radius:6px"></div>
<svg class="ic" style="left:1594px;top:192px" width="15" height="15" viewBox="0 0 15 15"><circle cx="6.3" cy="6.3" r="5" fill="none" stroke="#5b49d6" stroke-width="1.5"/><path d="M10 10l3.8 3.8" stroke="#5b49d6" stroke-width="1.5" stroke-linecap="round"/></svg>
<div class="t" style="left:1616px;top:193px;font-size:15px;color:#5b49d6">scaling</div>
<svg class="ic" style="left:1747px;top:194px" width="11" height="11" viewBox="0 0 11 11"><path d="M1.2 1.2l8.6 8.6M9.8 1.2L1.2 9.8" stroke="#5b49d6" stroke-width="1.5" stroke-linecap="round"/></svg>
<div class="a" style="left:1778px;top:191px;width:1px;height:17px;background:#e2e2e2"></div>
<div class="a" style="left:1788px;top:186px;width:27px;height:27px;background:#fff;border:1px solid #e2e2e2;border-radius:6px"></div>
<svg class="ic" style="left:1793px;top:191px" width="17" height="17" viewBox="0 0 24 24"><path d="M12 15a3 3 0 1 0 0-6 3 3 0 0 0 0 6z" fill="none" stroke="#555" stroke-width="1.8"/><path d="M19.4 15a1.65 1.65 0 0 0 .33 1.82l.06.06a2 2 0 1 1-2.83 2.83l-.06-.06a1.65 1.65 0 0 0-1.82-.33 1.65 1.65 0 0 0-1 1.51V21a2 2 0 1 1-4 0v-.09A1.65 1.65 0 0 0 9 19.4a1.65 1.65 0 0 0-1.820.33l-.6.06a2 2 0 1 1-2.83-2.83l.06-.06A1.65 1.65 0 0 0 4.680 15a1.65 1.65 0 0 0-1.510-1H3a2 2 0 1 1 0-4h.09A1.65 1.65 0 0 0 4.6 9a1.65 1.65 0 0 0-.33-1.82l-.06-.06a2 2 0 1 1 2.83-2.83l.06.06A1.65 1.65 0 0 0 9 4.680a1.65 1.65 0 0 0 1-1.510V3a2 2 0 1 1 4 0v.09a1.65 1.65 0 0 0 1 1.51 1.65 1.65 0 0 0 1.82-.33l.06-.06a2 2 0 1 1 2.83 2.830l-.06.06A1.65 1.65 0 0 0 19.4 9a1.65 1.65 0 0 0 1.51 1H21a2 2 0 1 1 0 4h-.09a1.65 1.65 0 0 0-1.51 1z" fill="none" stroke="#555" stroke-width="1.8"/></svg>
<div class="a" style="left:1819px;top:186px;width:84px;height:27px;background:#6049e3;border-radius:6px"></div>
<div class="a" style="left:1881px;top:186px;width:1px;height:27px;background:rgba(0,0,0,.18)"></div>
<svg class="ic" style="left:1829px;top:194px" width="12" height="12" viewBox="0 0 12 12"><path d="M6 .8v10.4M.8 6h10.4" stroke="#fff" stroke-width="1.6" stroke-linecap="round"/></svg>
<div class="t" style="left:1848px;top:195px;font-size:12.8px;font-weight:700;letter-spacing:-0.4px;color:#fff">Task</div>
<svg class="ic" style="left:1886px;top:196px" width="11" height="7" viewBox="0 0 11 7"><path d="M1.2 1.2l4.3 4.3 4.3-4.3" fill="none" stroke="#fff" stroke-width="1.4" stroke-linecap="round"/></svg>

<!-- ============ TABLE ============ -->
<svg class="ic" style="left:388px;top:245px" width="10" height="8" viewBox="0 0 10 8"><path d="M1 1.2h8L5 6.8z" fill="#6e6e6e" stroke="#6e6e6e" stroke-width="1" stroke-linejoin="round"/></svg>
<div class="a" style="left:415px;top:236px;width:79px;height:26px;background:#f0f0f0;border-radius:6px"></div>
<svg class="ic" style="left:421.7px;top:240.3px" width="17" height="17" viewBox="0 0 17 17"><circle cx="8.5" cy="8.5" r="7" fill="none" stroke="#8a8a8a" stroke-width="1.8" stroke-dasharray="3.3 2.2"/></svg>
<div class="t" style="left:444.5px;top:244px;font-size:12.8px;color:#1f1f1f;-webkit-text-stroke:0.35px #1f1f1f">TO DO</div>
<div class="t" style="left:510.5px;top:243px;font-size:14px;color:#7a7a7a">3</div>
<div class="hd" style="left:420px;top:280px;letter-spacing:0px">Name</div>
<div class="hd" style="left:822.5px;top:280px;letter-spacing:0px">Assignee</div>
<div class="hd" style="left:935px;top:280px;letter-spacing:0px">Due date</div>
<div class="hd" style="left:1054.5px;top:280px;letter-spacing:0px">Priority</div>
<div class="hd" style="left:1166.5px;top:280px;letter-spacing:-0.05px">Editor&#39;s Name</div>
<div class="hd" style="left:1304.4px;top:280px;letter-spacing:0px">Platform</div>
<div class="hd" style="left:1426.5px;top:280px;letter-spacing:-0.08px">Stage</div>
<div class="hd" style="left:1558.2px;top:280px;letter-spacing:-0.07px">Type of Creative</div>
<div class="hd" style="left:1699px;top:280px;letter-spacing:-0.25px">Scaling Stage</div>
<svg class="ic" style="left:1877px;top:278px" width="16" height="16" viewBox="0 0 16 16"><circle cx="8" cy="8" r="6.9" fill="none" stroke="#666" stroke-width="1.3"/><path d="M8 4.6v6.8M4.6 8h6.8" stroke="#666" stroke-width="1.3" stroke-linecap="round"/></svg>
<div class="a" style="left:415px;top:303px;width:1497px;height:1px;background:#ebebeb"></div>
<div class="a" style="left:415px;top:342px;width:1497px;height:2px;background:#ececec"></div>
<div class="a" style="left:415px;top:382px;width:1497px;height:1px;background:#ececec"></div>
<div class="a" style="left:415px;top:421px;width:1497px;height:1px;background:#ececec"></div>
<svg class="ic" style="left:426px;top:318px" width="7" height="10" viewBox="0 0 7 10"><path d="M1 1v8l5-4z" fill="#6e6e6e" stroke="#6e6e6e" stroke-width="1" stroke-linejoin="round"/></svg>
<svg class="ic" style="left:447.5px;top:314.5px" width="17" height="17" viewBox="0 0 17 17"><circle cx="8.5" cy="8.5" r="7" fill="none" stroke="#8a8a8a" stroke-width="1.8" stroke-dasharray="3.3 2.2"/></svg>
<div class="tn" style="left:478px;top:315.7px;font-size:15.5px;letter-spacing:0.15px">Scaling- Media Buying Subtasks ...</div>
<svg class="ic" style="left:737px;top:317px" width="13" height="13" viewBox="0 0 13 13"><circle cx="2.5" cy="2.5" r="1.6" fill="none" stroke="#6e6e6e" stroke-width="1.2"/><circle cx="10.3" cy="9.8" r="1.6" fill="none" stroke="#6e6e6e" stroke-width="1.2"/><path d="M2.5 4.1v2.2a3.5 3.5 0 0 0 3.5 3.5h2.7" fill="none" stroke="#6e6e6e" stroke-width="1.2"/></svg>
<div class="t" style="left:753px;top:316.5px;font-size:14px;color:#6e6e6e">1</div>
<svg class="ic" style="left:765px;top:317px" width="15" height="13" viewBox="0 0 15 13"><path d="M1 2.3l1.3 1.3L4.5 1M1 6.8l1.3 1.3L4.5 5.5M1 11.3l1.3 1.3" fill="none" stroke="#6e6e6e" stroke-width="1.2" stroke-linecap="round" stroke-linejoin="round"/><path d="M6.8 2.3h7.4M6.8 6.8h7.4M6.8 11.3h7.4" stroke="#6e6e6e" stroke-width="1.3" stroke-linecap="round"/></svg>
<div class="t" style="left:783px;top:316.5px;font-size:14px;letter-spacing:-0.15px;color:#6e6e6e">1/4</div>
<svg class="ic" style="left:823px;top:315px" width="17" height="17" viewBox="0 0 17 17"><circle cx="7.5" cy="5.2" r="3.7" fill="none" stroke="#7f7f7f" stroke-width="1.3"/><path d="M10 15.5H2.3c-.9 0-1.3-.7-1-1.4C2.3 11.3 4.6 9.5 7.5 9.5c.9 0 1.7.1 2.4.4" fill="none" stroke="#7f7f7f" stroke-width="1.3" stroke-linecap="round"/><path d="M13.3 10.5v5.2M10.7 13.1h5.2" stroke="#7f7f7f" stroke-width="1.4" stroke-linecap="round"/></svg>
<svg class="ic" style="left:935px;top:315px" width="18" height="17" viewBox="0 0 18 17"><path d="M9 15.5H3.5a2.2 2.2 0 0 1-2.2-2.2V5a2.2 2.2 0 0 1 2.2-2.2h9.3A2.2 2.2 0 0 1 15 5v3.5" fill="none" stroke="#7f7f7f" stroke-width="1.3" stroke-linecap="round"/><path d="M1.3 6.5H15M5 1v3M11.3 1v3" stroke="#7f7f7f" stroke-width="1.3" stroke-linecap="round"/><path d="M14 10.5v5.5M11.2 13.3h5.6" stroke="#7f7f7f" stroke-width="1.4" stroke-linecap="round"/></svg>
<svg class="ic" style="left:1054px;top:315px" width="15" height="16" viewBox="0 0 15 16"><path d="M1.5 15.2V1.5M1.5 1.8c2.2-1 4.2-.6 6 .3s3.8 1.2 5.8.3l-1.8 4.2 1.8 3.8c-2 .9-4 .6-5.8-.3s-3.8-1.2-6-.3" fill="none" stroke="#7f7f7f" stroke-width="1.3" stroke-linecap="round" stroke-linejoin="round"/></svg>
<div class="dash" style="left:1166.5px;top:323px"></div>
<div class="dash" style="left:1304px;top:323px"></div>
<div class="badge" style="left:1420px;top:309.7px;width:118px;background:#30cc71">Scaling</div>
<div class="dash" style="left:1558px;top:323px"></div>
<div class="badge" style="left:1692px;top:309.7px;width:166px;background:#e880f8;letter-spacing:0.29px">Media Buying</div>
<svg class="ic" style="left:447.5px;top:354.5px" width="17" height="17" viewBox="0 0 17 17"><circle cx="8.5" cy="8.5" r="7" fill="none" stroke="#8a8a8a" stroke-width="1.8" stroke-dasharray="3.3 2.2"/></svg>
<div class="tn" style="left:478px;top:355.7px;font-size:15.5px;letter-spacing:0px">Scaling- Creative Side Subtasks chec...</div>
<svg class="ic" style="left:764px;top:357px" width="15" height="13" viewBox="0 0 15 13"><path d="M1 2.3l1.3 1.3L4.5 1M1 6.8l1.3 1.3L4.5 5.5M1 11.3l1.3 1.3" fill="none" stroke="#6e6e6e" stroke-width="1.2" stroke-linecap="round" stroke-linejoin="round"/><path d="M6.8 2.3h7.4M6.8 6.8h7.4M6.8 11.3h7.4" stroke="#6e6e6e" stroke-width="1.3" stroke-linecap="round"/></svg>
<div class="t" style="left:782px;top:356.5px;font-size:14px;letter-spacing:0.17px;color:#6e6e6e">0/3</div>
<svg class="ic" style="left:823px;top:355px" width="17" height="17" viewBox="0 0 17 17"><circle cx="7.5" cy="5.2" r="3.7" fill="none" stroke="#7f7f7f" stroke-width="1.3"/><path d="M10 15.5H2.3c-.9 0-1.3-.7-1-1.4C2.3 11.3 4.6 9.5 7.5 9.5c.9 0 1.7.1 2.4.4" fill="none" stroke="#7f7f7f" stroke-width="1.3" stroke-linecap="round"/><path d="M13.3 10.5v5.2M10.7 13.1h5.2" stroke="#7f7f7f" stroke-width="1.4" stroke-linecap="round"/></svg>
<svg class="ic" style="left:935px;top:355px" width="18" height="17" viewBox="0 0 18 17"><path d="M9 15.5H3.5a2.2 2.2 0 0 1-2.2-2.2V5a2.2 2.2 0 0 1 2.2-2.2h9.3A2.2 2.2 0 0 1 15 5v3.5" fill="none" stroke="#7f7f7f" stroke-width="1.3" stroke-linecap="round"/><path d="M1.3 6.5H15M5 1v3M11.3 1v3" stroke="#7f7f7f" stroke-width="1.3" stroke-linecap="round"/><path d="M14 10.5v5.5M11.2 13.3h5.6" stroke="#7f7f7f" stroke-width="1.4" stroke-linecap="round"/></svg>
<svg class="ic" style="left:1054px;top:355px" width="15" height="16" viewBox="0 0 15 16"><path d="M1.5 15.2V1.5M1.5 1.8c2.2-1 4.2-.6 6 .3s3.8 1.2 5.8.3l-1.8 4.2 1.8 3.8c-2 .9-4 .6-5.8-.3s-3.8-1.2-6-.3" fill="none" stroke="#7f7f7f" stroke-width="1.3" stroke-linecap="round" stroke-linejoin="round"/></svg>
<div class="dash" style="left:1166.5px;top:363px"></div>
<div class="dash" style="left:1304px;top:363px"></div>
<div class="badge" style="left:1420px;top:349.7px;width:118px;background:#30cc71">Scaling</div>
<div class="dash" style="left:1558px;top:363px"></div>
<div class="badge" style="left:1692px;top:349.7px;width:166px;background:#3397dd;letter-spacing:0px">Creative Slide</div>
<svg class="ic" style="left:447.5px;top:394.0px" width="17" height="17" viewBox="0 0 17 17"><circle cx="8.5" cy="8.5" r="7" fill="none" stroke="#8a8a8a" stroke-width="1.8" stroke-dasharray="3.3 2.2"/></svg>
<div class="tn" style="left:478px;top:395.2px;font-size:15.5px;letter-spacing:0.09px">Scaling- Creative side Subtasks Template</div>
<svg class="ic" style="left:823px;top:394px" width="17" height="17" viewBox="0 0 17 17"><circle cx="7.5" cy="5.2" r="3.7" fill="none" stroke="#7f7f7f" stroke-width="1.3"/><path d="M10 15.5H2.3c-.9 0-1.3-.7-1-1.4C2.3 11.3 4.6 9.5 7.5 9.5c.9 0 1.7.1 2.4.4" fill="none" stroke="#7f7f7f" stroke-width="1.3" stroke-linecap="round"/><path d="M13.3 10.5v5.2M10.7 13.1h5.2" stroke="#7f7f7f" stroke-width="1.4" stroke-linecap="round"/></svg>
<svg class="ic" style="left:935px;top:394px" width="18" height="17" viewBox="0 0 18 17"><path d="M9 15.5H3.5a2.2 2.2 0 0 1-2.2-2.2V5a2.2 2.2 0 0 1 2.2-2.2h9.3A2.2 2.2 0 0 1 15 5v3.5" fill="none" stroke="#7f7f7f" stroke-width="1.3" stroke-linecap="round"/><path d="M1.3 6.5H15M5 1v3M11.3 1v3" stroke="#7f7f7f" stroke-width="1.3" stroke-linecap="round"/><path d="M14 10.5v5.5M11.2 13.3h5.6" stroke="#7f7f7f" stroke-width="1.4" stroke-linecap="round"/></svg>
<svg class="ic" style="left:1054px;top:394px" width="15" height="16" viewBox="0 0 15 16"><path d="M1.5 15.2V1.5M1.5 1.8c2.2-1 4.2-.6 6 .3s3.8 1.2 5.8.3l-1.8 4.2 1.8 3.8c-2 .9-4 .6-5.8-.3s-3.8-1.2-6-.3" fill="none" stroke="#7f7f7f" stroke-width="1.3" stroke-linecap="round" stroke-linejoin="round"/></svg>
<div class="dash" style="left:1166.5px;top:403px"></div>
<div class="dash" style="left:1304px;top:403px"></div>
<div class="badge" style="left:1420px;top:389.2px;width:118px;background:#30cc71">Scaling</div>
<div class="dash" style="left:1558px;top:403px"></div>
<div class="badge" style="left:1692px;top:389.2px;width:166px;background:#3397dd;letter-spacing:0px">Creative Slide</div>
<svg class="ic" style="left:449px;top:436px" width="14" height="14" viewBox="0 0 14 14"><path d="M7 1v12M1 7h12" stroke="#8a8a8a" stroke-width="1.3" stroke-linecap="round"/></svg>
<div class="t" style="left:478.5px;top:436px;font-size:15px;color:#7a7a7a">Add Task</div>

</body></html>
